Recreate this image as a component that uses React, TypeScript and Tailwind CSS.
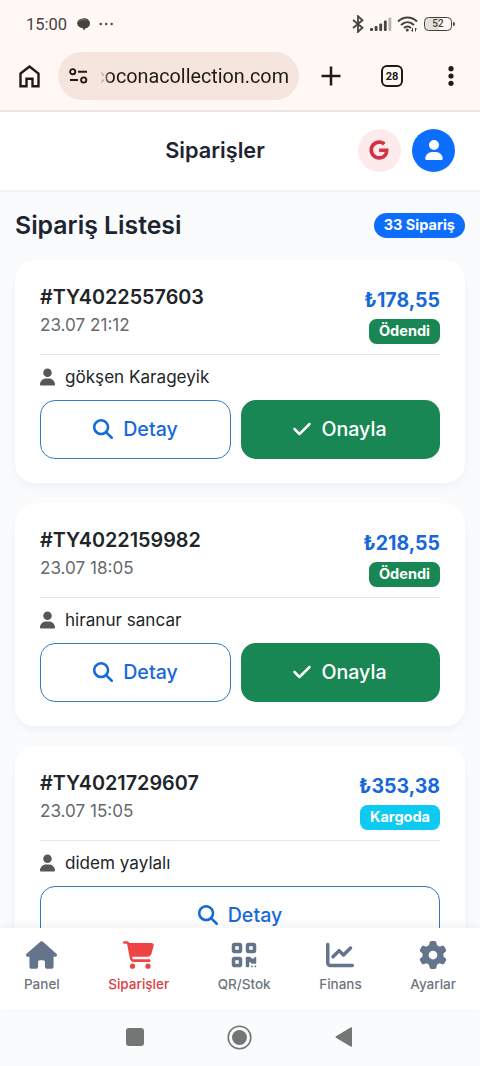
import type { ReactNode } from 'react';
import {
  FaCartShopping,
  FaChartLine,
  FaCheck,
  FaGear,
  FaGoogle,
  FaHouse,
  FaMagnifyingGlass,
  FaQrcode,
  FaUser,
} from 'react-icons/fa6';

type Order = {
  id: string;
  date: string;
  price: string;
  customer: string;
  status: 'Ödendi' | 'Kargoda';
};

const orders: Order[] = [
  { id: '#TY4022557603', date: '23.07 21:12', price: '₺178,55', customer: 'gökşen Karageyik', status: 'Ödendi' },
  { id: '#TY4022159982', date: '23.07 18:05', price: '₺218,55', customer: 'hiranur sancar', status: 'Ödendi' },
  { id: '#TY4021729607', date: '23.07 15:05', price: '₺353,38', customer: 'didem yaylalı', status: 'Kargoda' },
];

function StatusBar() {
  return (
    <div className="flex h-12 items-center justify-between pl-[26px] pr-[25px] text-[#464240]">
      <div className="flex items-center">
        <span className="mt-[2px] w-[41px] whitespace-nowrap font-[Roboto] text-[16.5px]">15:00</span>
        <svg className="ml-[10px]" width="13" height="13" viewBox="0 0 13 13" fill="currentColor">
          <path d="M6 0.4C9.8 0 13 2.2 13 5.4c0 2.4-1.8 4.3-4.3 4.8L6.6 12.6 6 10.3C2.8 10 .4 8 .2 5.3 0 2.6 2.5.7 6 .4Z" />
          <path d="M.8 4.5C2.4 1.9 6 1.1 9.5 2.1" fill="none" stroke="#8d8885" strokeWidth=".7" />
        </svg>
        <svg className="ml-[9px]" width="15" height="4" viewBox="0 0 15 4" fill="currentColor">
          <circle cx="1.7" cy="2" r="1.2" />
          <circle cx="7.2" cy="2" r="1.2" />
          <circle cx="12.7" cy="2" r="1.2" />
        </svg>
      </div>
      <div className="flex items-center">
        <svg width="12" height="18" viewBox="0 0 12 18" fill="none" stroke="currentColor" strokeWidth="1.8">
          <path d="M1 5l9.500 7.700L6 16.800V1.200l4.500 4.100L1 13" />
        </svg>
        <svg className="ml-[6px]" width="22" height="14" viewBox="0 0 22 14" fill="currentColor">
          <rect x="0" y="11" width="3" height="3" rx="1" />
          <rect x="4.7" y="9" width="2.8" height="5" rx="1" />
          <rect x="9.3" y="6.5" width="2.8" height="7.5" rx="1" />
          <rect x="13.9" y="3.5" width="2.8" height="10.5" rx="1" />
          <rect x="18.5" y="0.5" width="2.8" height="13.5" rx="1" fill="#b8b3b0" />
        </svg>
        <svg className="ml-[5px]" width="21" height="16" viewBox="0 0 21 16" fill="none" stroke="currentColor" strokeWidth="2.1">
          <path d="M1 5.5C6.500.2 14.500.2 20 5.5" />
          <path d="M4 9c4-3.700 9-3.700 13 0" />
          <path d="M7 12c2-1.900 5-1.900 7 0" />
          <circle cx="10.3" cy="14" r="1.5" fill="currentColor" stroke="none" />
          <path d="M15.500 12v3.500M18.500 12v3.500M14.200 14.200l1.300 1.300M18.500 12l1.300 1.300" strokeWidth="1" />
        </svg>
        <div className="ml-[6px] flex h-[14px] w-7 items-center justify-center rounded-[4.5px] border-[1.5px] border-current bg-[linear-gradient(to_right,#e5dfdb_52%,transparent_52%)] font-[Roboto] text-[10px] font-medium leading-none">
          52
        </div>
        <span className="ml-px h-1 w-[2px] rounded-r bg-current" />
      </div>
    </div>
  );
}

function BrowserBar() {
  return (
    <div className="flex h-[62px] items-start pl-[19px] pt-1 text-[#211a16]">
      <svg className="mt-[13px]" width="21" height="23" viewBox="0 0 21 23" fill="none" stroke="currentColor" strokeWidth="2.4">
        <path d="M1.500 8.500 10.500 1.600l9 6.900v12.800h-6v-7.500h-6v7.500h-6Z" />
      </svg>
      <div className="ml-[18px] flex h-12 w-[241px] items-center rounded-full bg-[#f5e5de] pl-[11px]">
        <svg width="19" height="16" viewBox="0 0 19 16" fill="none" stroke="currentColor" strokeWidth="1.9">
          <circle cx="3.7" cy="3.7" r="2.6" />
          <path d="M9 3.700h9M1 12h8" />
          <circle cx="14.7" cy="12" r="2.6" />
        </svg>
        {/* The start of the address fades out behind the site settings icon */}
        <div className="ml-[3px] mt-[2px] flex w-[198px] justify-end whitespace-nowrap font-[Roboto] text-[19.8px] [mask-image:linear-gradient(to_right,transparent_9px,black_19px)]">
          coconacollection.com
        </div>
      </div>
      <svg className="ml-[22px] mt-[14px]" width="20" height="20" viewBox="0 0 20 20" stroke="currentColor" strokeWidth="2.5">
        <path d="M10 .5v19M.5 10h19" />
      </svg>
      <div className="ml-[40px] mt-[13px] flex size-[22px] items-center justify-center rounded-[6px] border-2 border-current font-[Roboto] text-[11px] font-bold leading-none">
        28
      </div>
      <svg className="ml-[45px] mt-[14px]" width="6" height="20" viewBox="0 0 6 20" fill="currentColor">
        <circle cx="3" cy="2.7" r="2.6" />
        <circle cx="3" cy="10" r="2.6" />
        <circle cx="3" cy="17.3" r="2.6" />
      </svg>
    </div>
  );
}

function OrderCard({ order }: { order: Order }) {
  const paid = order.status === 'Ödendi';

  return (
    <article className="h-[223px] shrink-0 rounded-[20px] bg-white px-[25px] pt-[25px] shadow-[0_5px_10px_rgba(30,41,59,0.04)]">
      <div className="flex h-[69.5px] justify-between border-b border-[#e3e5e8]">
        <div>
          <h3 className="text-[19.8px] font-semibold leading-6">{order.id}</h3>
          <p className="mt-[3px] text-[17.1px] leading-[26px] text-[#666a6d]">{order.date}</p>
        </div>
        <div className="flex flex-col items-end">
          <p className="mt-[3px] text-[19.5px] font-bold leading-6 text-[#1769d9]">{order.price}</p>
          <span
            className={`mt-[6.5px] flex h-[25px] items-center rounded-[7.5px] px-[10px] pt-px text-[14.5px] font-bold leading-none text-white ${
              paid ? 'bg-[#198754]' : 'bg-[#0dcaf0]'
            }`}
          >
            {order.status}
          </span>
        </div>
      </div>
      <div className="flex h-[45.5px] items-center text-[17.1px]">
        <FaUser className="mb-px h-[18px] w-[15px] text-[#55585a]" />
        <span className="ml-[10px]">{order.customer}</span>
      </div>
      <div className="flex gap-[10px] text-[19.6px] font-medium">
        <button
          className={`flex h-[58.5px] items-center justify-center gap-[10px] rounded-[15px] border border-[#3579ba] text-[#1769d9] ${
            paid ? 'w-[191px]' : 'w-full'
          }`}
        >
          <FaMagnifyingGlass className="mb-px size-5" />
          Detay
        </button>
        {paid && (
          <button className="flex h-[58.5px] flex-1 items-center justify-center gap-[9px] rounded-[15px] bg-[#198754] pr-[2px] text-white">
            <FaCheck className="mb-px size-5" />
            Onayla
          </button>
        )}
      </div>
    </article>
  );
}

function NavItem({ icon, label, active = false }: { icon: ReactNode; label: string; active?: boolean }) {
  return (
    <a className={`flex flex-col items-center ${active ? 'text-[#dc3d42]' : 'text-[#6c757d]'}`}>
      <span className={`flex h-7 items-center ${active ? 'text-[#ef4444]' : 'text-[#64748b]'}`}>{icon}</span>
      <span className="mt-[5px] text-[13.5px] font-medium leading-5">{label}</span>
    </a>
  );
}

export default function App() {
  return (
    <div className="flex h-[1066px] w-[480px] flex-col overflow-hidden bg-[#f9fbfd] font-[Inter,sans-serif] text-[#212529]">
      <div className="h-[112px] shrink-0 border-b-2 border-[#ece4e2] bg-[#fff8f4]">
        <StatusBar />
        <BrowserBar />
      </div>

      {/* App header */}
      <header className="flex h-20 shrink-0 items-center border-b-2 border-[#f1f3f5] bg-white pb-[2px] pl-[72px] pr-[25px]">
        <h1 className="flex-1 text-center text-[21.7px] font-semibold text-[#1e2430]">Siparişler</h1>
        <button className="flex size-[43px] items-center justify-center rounded-full bg-[#fdebec] pr-[2px] text-[#d13345]">
          <FaGoogle className="size-5" />
        </button>
        <button className="ml-[11px] flex size-[43px] items-center justify-center rounded-full bg-[#0d6efd] text-white">
          <FaUser className="size-5" />
        </button>
      </header>

      {/* Orders */}
      <main className="min-h-0 flex-1 overflow-hidden px-[15px]">
        <div className="flex h-[68px] items-center justify-between">
          <h2 className="text-[24.8px] font-semibold text-[#1e2430]">Sipariş Listesi</h2>
          <span className="mb-px flex h-[25px] items-center rounded-full bg-[#0d6efd] px-[10px] text-[14.5px] font-bold leading-none text-white">
            33 Sipariş
          </span>
        </div>
        <div className="flex flex-col gap-5">
          {orders.map((order) => (
            <OrderCard key={order.id} order={order} />
          ))}
        </div>
      </main>

      {/* Bottom navigation */}
      <nav className="relative flex h-[82px] shrink-0 justify-between bg-white px-6 pt-[13px] shadow-[0_-3px_10px_rgba(0,0,0,0.05)]">
        <NavItem icon={<FaHouse className="h-7 w-[31px]" />} label="Panel" />
        <NavItem icon={<FaCartShopping className="h-7 w-[31px]" />} label="Siparişler" active />
        <NavItem icon={<FaQrcode className="size-7" />} label="QR/Stok" />
        <NavItem icon={<FaChartLine className="size-7" />} label="Finans" />
        <NavItem icon={<FaGear className="size-7" />} label="Ayarlar" />
      </nav>

      {/* System buttons */}
      <div className="flex h-14 shrink-0 items-center justify-center pb-[2px] pr-[2px] text-[#747675]">
        <span className="size-[18px] rounded-[3px] bg-current" />
        <svg className="ml-[83px]" width="25" height="25" viewBox="0 0 25 25">
          <circle cx="12.5" cy="12.5" r="11.3" fill="none" stroke="currentColor" strokeWidth="1.6" />
          <circle cx="12.5" cy="12.5" r="7.5" fill="currentColor" />
        </svg>
        <svg className="ml-[83px]" width="18" height="20" viewBox="0 0 18 20" fill="currentColor">
          <path d="M1 9.200 16 .3q1-.4 1 .700v18q0 1.100-1 .7L1 10.800q-1-.8 0-1.600Z" />
        </svg>
      </div>
    </div>
  );
}
